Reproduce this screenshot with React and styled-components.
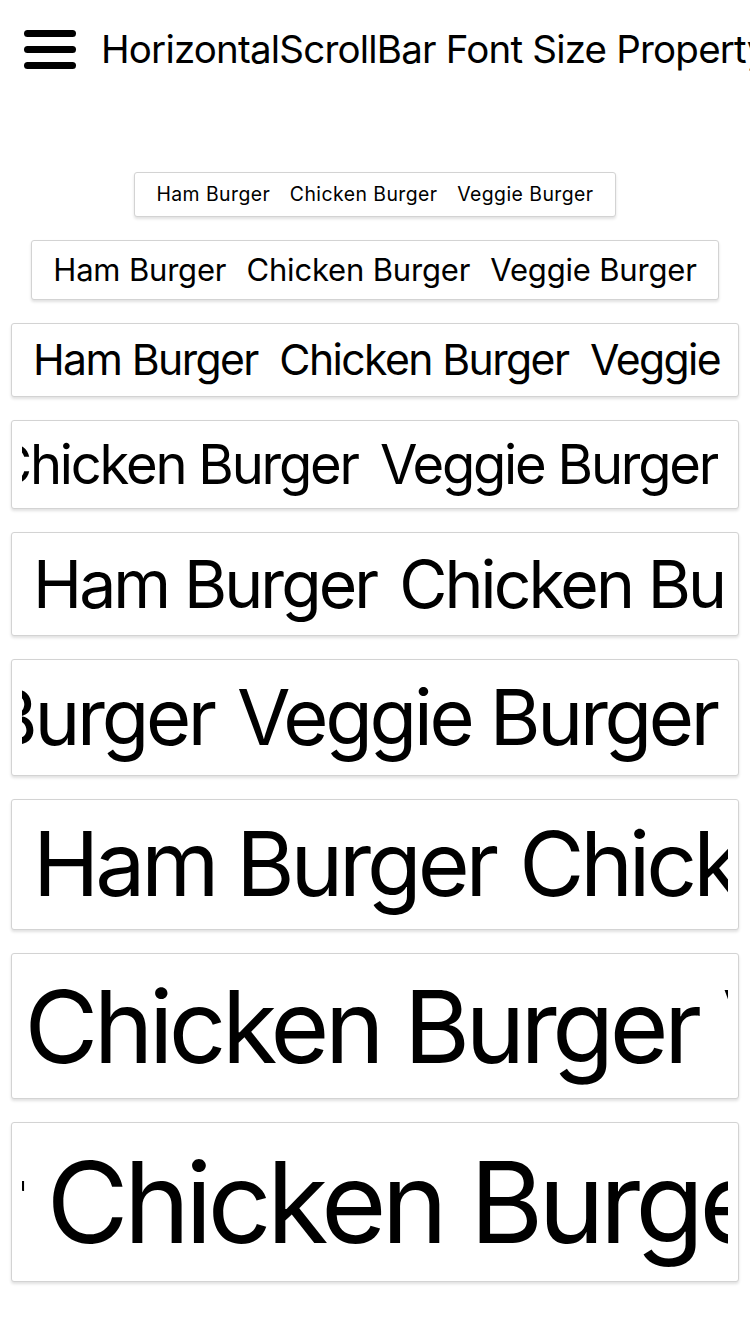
import React, { useEffect, useRef } from 'react'
import styled, { createGlobalStyle } from 'styled-components'

const GlobalStyle = createGlobalStyle`
  html, body {
    margin: 0;
    padding: 0;
    background: #fff;
    font-family: Inter, 'Noto Sans', 'Liberation Sans', sans-serif;
    color: #000;
  }
  * {
    box-sizing: border-box;
  }
`

const Page = styled.div`
  width: 750px;
  min-height: 1334px;
  overflow: hidden;
`

const Header = styled.header`
  height: 98px;
  display: flex;
  align-items: center;
  padding: 0 0 0 24px;
  gap: 25px;
  white-space: nowrap;
  overflow: hidden;
`

const MenuButton = styled.div`
  width: 52px;
  display: flex;
  flex-direction: column;
  gap: 9px;
  flex-shrink: 0;
`

const MenuLine = styled.span`
  display: block;
  height: 7px;
  border-radius: 4px;
  background: #000;
`

const Title = styled.h1`
  margin: 0;
  font-size: 38.5px;
  font-weight: 400;
  letter-spacing: -0.8px;
`

const List = styled.div`
  display: flex;
  flex-direction: column;
  align-items: center;
  gap: 23px;
  padding: 74px 11px 40px;
`

const Bar = styled.div`
  width: fit-content;
  max-width: 100%;
  background: #fff;
  border: 1px solid #d3d3d3;
  border-radius: 3px;
  box-shadow: 0 2px 3px rgba(0, 0, 0, 0.12);
  padding: 7px 10px;
`

const Viewport = styled.div`
  overflow-x: auto;
  overflow-y: hidden;
  scrollbar-width: none;
  &::-webkit-scrollbar {
    display: none;
  }
`

// letter-spacing trails after the last glyph, so the gap gives it back
const Track = styled.div`
  display: flex;
  width: max-content;
  gap: ${props => 20 - props.spacing}px;
  padding: 0 11px;
  font-size: ${props => props.size}px;
  letter-spacing: ${props => props.spacing}px;
  line-height: ${props => props.line}px;
  white-space: nowrap;
`

const Item = styled.span`
  display: block;
`

const items = ['Ham Burger', 'Chicken Burger', 'Veggie Burger']

// scroll: 'end' goes to the far right; item/offset puts that item offset px from the left edge
const bars = [
  { size: 19.4, spacing: 0.45, line: 29 },
  { size: 31, spacing: -0.18, line: 44 },
  { size: 42.7, spacing: -1.6, line: 58 },
  { size: 54.3, spacing: -2.2, line: 73, scroll: 'end' },
  { size: 66, spacing: -2.9, line: 88 },
  { size: 77.6, spacing: -3.3, line: 101, scroll: 'end' },
  { size: 89.2, spacing: -4.1, line: 115 },
  { size: 100.9, spacing: -4.5, line: 130, item: 1, offset: 3 },
  { size: 112.5, spacing: -5, line: 144, item: 1, offset: 25 },
]

const ScrollBar = ({ size, spacing, line, scroll, item, offset }) => {
  const viewRef = useRef(null)

  useEffect(() => {
    const view = viewRef.current
    if (!view) return
    if (scroll === 'end') {
      view.scrollLeft = view.scrollWidth
    } else if (item !== undefined) {
      const el = view.firstChild.children[item]
      const left = el.getBoundingClientRect().left - view.getBoundingClientRect().left + view.scrollLeft
      view.scrollLeft = left - offset
    }
  }, [scroll, item, offset])

  return (
    <Bar>
      <Viewport ref={viewRef}>
        <Track size={size} spacing={spacing} line={line}>
          {items.map(name => (
            <Item key={name}>{name}</Item>
          ))}
        </Track>
      </Viewport>
    </Bar>
  )
}

const App = () => {
  return (
    <Page>
      <GlobalStyle />
      <Header>
        <MenuButton>
          <MenuLine />
          <MenuLine />
          <MenuLine />
        </MenuButton>
        <Title>HorizontalScrollBar Font Size Property</Title>
      </Header>
      <List>
        {bars.map(bar => (
          <ScrollBar key={bar.size} {...bar} />
        ))}
      </List>
    </Page>
  )
}

export default App
